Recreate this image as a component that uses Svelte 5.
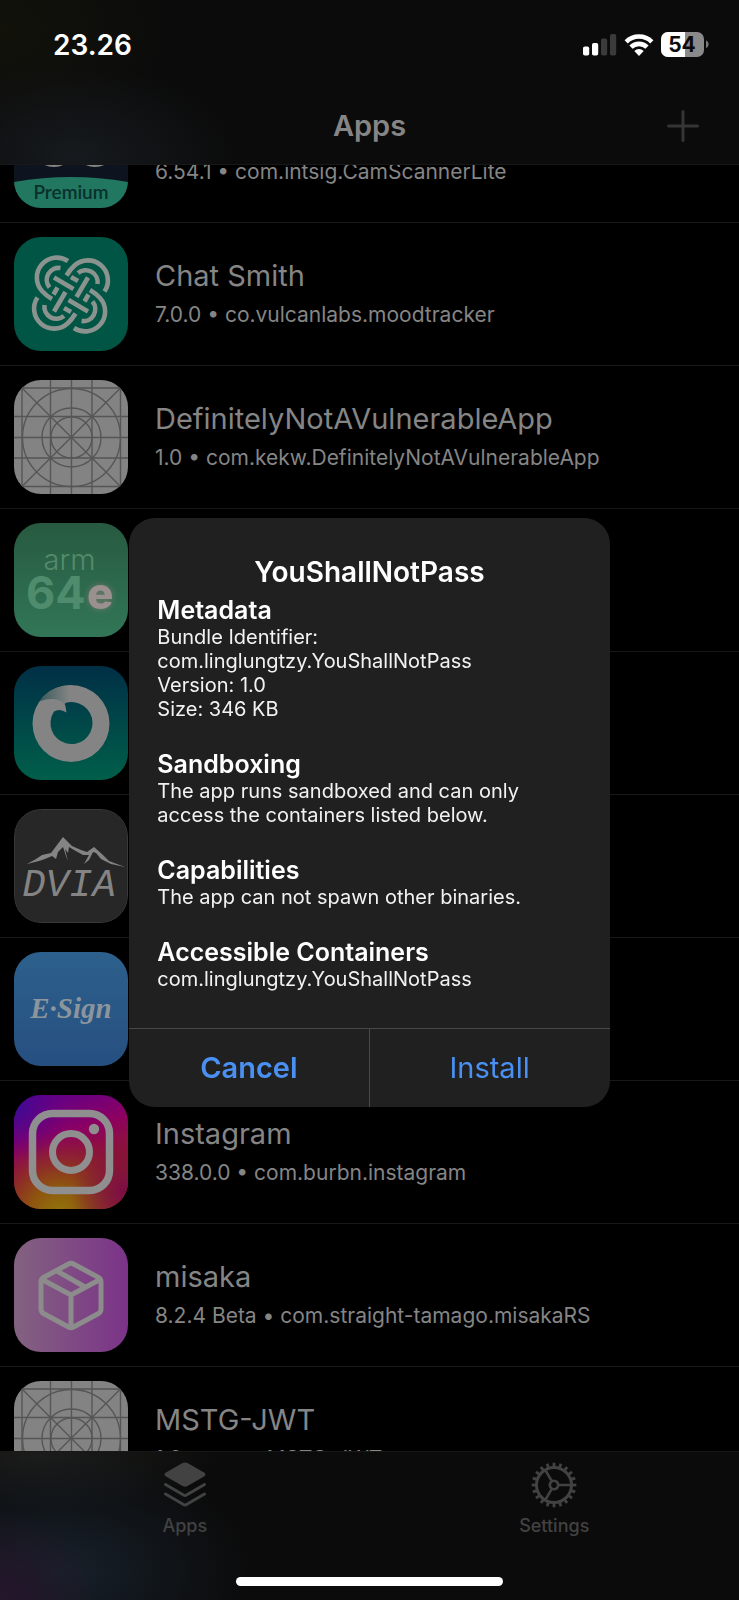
<script>
  const apps = [
    { icon: 'scanner', detail: '6.54.1 • com.intsig.CamScannerLite' },
    { icon: 'knot', name: 'Chat Smith', detail: '7.0.0 • co.vulcanlabs.moodtracker' },
    { icon: 'grid', name: 'DefinitelyNotAVulnerableApp', detail: '1.0 • com.kekw.DefinitelyNotAVulnerableApp' },
    { icon: 'arm' },
    { icon: 'ring' },
    { icon: 'dvia' },
    { icon: 'esign' },
    { icon: 'instagram', name: 'Instagram', detail: '338.0.0 • com.burbn.instagram' },
    { icon: 'box', name: 'misaka', detail: '8.2.4 Beta • com.straight-tamago.misakaRS' },
    { icon: 'grid', name: 'MSTG-JWT', detail: '1.0 • acme.MSTG-JWT' }
  ];

  const sections = [
    { title: 'Metadata', lines: ['Bundle Identifier:', 'com.linglungtzy.YouShallNotPass', 'Version: 1.0', 'Size: 346 KB'] },
    { title: 'Sandboxing', lines: ['The app runs sandboxed and can only access the containers listed below.'] },
    { title: 'Capabilities', lines: ['The app can not spawn other binaries.'] },
    { title: 'Accessible Containers', lines: ['com.linglungtzy.YouShallNotPass'] }
  ];

  const quarters = [0, 90, 180, 270];
  const gridLines = [8, 36.5, 57.5, 78, 106.5];
  const teeth = Array.from({ length: 20 }, (_, i) => i * 18);
</script>

<div class="screen">
  <header>
    <div class="status">
      <span class="time">23.26</span>
      <span class="indicators">
        <svg width="34" height="22" viewBox="0 0 34 22" aria-hidden="true">
          <rect x="0" y="12.500" width="6.200" height="9" rx="1.800" fill="#fff" />
          <rect x="9" y="9" width="6.200" height="12.500" rx="1.800" fill="#fff" />
          <rect x="18" y="4.500" width="6.200" height="17" rx="1.800" fill="#3b3b3b" />
          <rect x="27" y="0" width="6.200" height="21.500" rx="1.800" fill="#3b3b3b" />
        </svg>
        <svg width="30" height="22" viewBox="0 0 30 22" aria-hidden="true">
          <g fill="none" stroke="#fff" stroke-width="4.600">
            <path d="M2.200 7.800A18.200 18.200 0 0 1 27.800 7.800" />
            <path d="M7 13.200A11.400 11.400 0 0 1 23 13.200" />
          </g>
          <path d="M10.300 17A6.700 6.700 0 0 1 19.700 17L15 22Z" fill="#fff" />
        </svg>
        <svg width="48" height="25" viewBox="0 0 48 25" aria-hidden="true">
          <defs>
            <clipPath id="battery"><rect width="43" height="25" rx="7" /></clipPath>
          </defs>
          <g clip-path="url(#battery)">
            <rect width="43" height="25" fill="#8a8a8a" />
            <rect width="24" height="25" fill="#fff" />
          </g>
          <path d="M45 8.500C48.500 9.500 48.500 15 45 16Z" fill="#777" />
          <text x="21" y="20" text-anchor="middle" class="charge">54</text>
        </svg>
      </span>
    </div>
    <div class="nav">
      <h1>Apps</h1>
      <button class="add" aria-label="Add">
        <svg width="32" height="32" viewBox="0 0 32 32" aria-hidden="true">
          <path d="M16 1.500V30.500M1.500 16H30.500" stroke="#353535" stroke-width="3" stroke-linecap="round" />
        </svg>
      </button>
    </div>
  </header>

  <main>
    <ul>
      {#each apps as app}
        <li>
          <svg class="icon {app.icon}" viewBox="0 0 114 114" aria-hidden="true">
            {#if app.icon === 'scanner'}
              <rect width="114" height="114" fill="#0d131f" />
              <g fill="none" stroke="#858585" stroke-width="6">
                <circle cx="40" cy="51" r="19" />
                <circle cx="81" cy="51" r="19" />
              </g>
              <path d="M0 88Q57 78 114 88V114H0Z" fill="#217760" />
              <text x="57" y="105" text-anchor="middle" class="premium">Premium</text>
            {:else if app.icon === 'knot'}
              <rect width="114" height="114" fill="#005544" />
              <g fill="none" stroke="#8b938f" stroke-width="4.600">
                {#each quarters as turn}
                  <g transform="translate(57 57.500) rotate({turn})">
                    <path d="M-3-33.500A20 20 0 0 0-29-3.500Q-25 1-19 4.500" />
                    <path d="M-10.500-26.500A12 12 0 0 0-21.500-7" />
                    <path d="M-17-17L2.500-5.500M0-17.500L7-13.500" />
                  </g>
                {/each}
              </g>
            {:else if app.icon === 'grid'}
              <rect width="114" height="114" fill="#838383" />
              <g fill="none" stroke="#565656" stroke-width="1.400">
                {#each gridLines as at}
                  <path d="M{at} 0V114M0 {at}H114" />
                {/each}
                <circle cx="57.500" cy="57.500" r="49" />
                <circle cx="57.500" cy="57.500" r="29.500" />
                <circle cx="57.500" cy="57.500" r="20.500" />
                <path d="M8 8L106.500 106.500M106.500 8L8 106.500" />
              </g>
            {:else if app.icon === 'arm'}
              <defs>
                <linearGradient id="leaf" x2="0" y2="1">
                  <stop stop-color="#275a40" />
                  <stop offset="1" stop-color="#327657" />
                </linearGradient>
              </defs>
              <rect width="114" height="114" fill="url(#leaf)" />
              <text x="55.500" y="47" text-anchor="middle" class="thin">arm</text>
              <text x="12" y="86" class="digits">64</text>
              <text x="73" y="86" class="glow">e</text>
            {:else if app.icon === 'ring'}
              <defs>
                <linearGradient id="sea" x2="0" y2="1">
                  <stop stop-color="#002f46" />
                  <stop offset="1" stop-color="#005f4a" />
                </linearGradient>
                <linearGradient id="fold" x1="0" x2="1">
                  <stop stop-color="#3c5a5c" />
                  <stop offset="0.900" stop-color="#848484" />
                </linearGradient>
              </defs>
              <rect width="114" height="114" fill="url(#sea)" />
              <path fill-rule="evenodd" fill="#848484" d="M57 19A38.500 38.500 0 1 1 57 96A38.500 38.500 0 0 1 57 19ZM50.500 37.300A21 21 0 1 1 40 45.500Q46 42 52.500 46.500Q52 41 50.500 37.300Z" />
              <path d="M25.500 35.500C33 24 44 19 58 19.500Q62 28 50.500 38C46 33 37 31 25.500 35.500Z" fill="url(#fold)" />
            {:else if app.icon === 'dvia'}
              <rect x="0.500" y="0.500" width="113" height="113" rx="26" fill="#272727" stroke="#393939" />
              <path fill="#848484" d="M13 55L22 50L28 46L37 44L49 28L58 37L67 41L73 43L80 38L89 46L95 52L111 58L97 55L87 50L82 44L79 43L75 51L70 55L75 46L69 46L60 41L55 38L54 44L51 40L54 52L52 47L49 38L44 43L42 50L38 47L31 50L25 52Z" />
              <text x="55" y="87" text-anchor="middle" class="brush">DVIA</text>
            {:else if app.icon === 'esign'}
              <defs>
                <linearGradient id="sky" x2="0" y2="1">
                  <stop stop-color="#2d608c" />
                  <stop offset="1" stop-color="#264f80" />
                </linearGradient>
              </defs>
              <rect width="114" height="114" fill="url(#sky)" />
              <text x="57" y="66" text-anchor="middle" class="script">E·Sign</text>
            {:else if app.icon === 'instagram'}
              <defs>
                <linearGradient id="dusk" x1="0.150" y1="0" x2="0.500" y2="1">
                  <stop stop-color="#5a0090" />
                  <stop offset="0.400" stop-color="#8c0062" />
                  <stop offset="0.750" stop-color="#8e1a2c" />
                  <stop offset="1" stop-color="#8d3a14" />
                </linearGradient>
                <radialGradient id="ember" cx="0.400" cy="1.050" r="0.750">
                  <stop stop-color="#92780a" />
                  <stop offset="0.350" stop-color="#8e5410" />
                  <stop offset="1" stop-color="#8e1a2c" stop-opacity="0" />
                </radialGradient>
                <radialGradient id="rose" cx="1" cy="0.850" r="0.500">
                  <stop stop-color="#7c0a48" />
                  <stop offset="1" stop-color="#7c0a48" stop-opacity="0" />
                </radialGradient>
                <radialGradient id="violet" cx="0" cy="0.100" r="0.500">
                  <stop stop-color="#3a0b96" />
                  <stop offset="1" stop-color="#6b0080" stop-opacity="0" />
                </radialGradient>
              </defs>
              <rect width="114" height="114" fill="url(#dusk)" />
              <rect width="114" height="114" fill="url(#ember)" />
              <rect width="114" height="114" fill="url(#rose)" />
              <rect width="114" height="114" fill="url(#violet)" />
              <rect x="18.500" y="18.500" width="77" height="77" rx="20" fill="none" stroke="#8f8f8f" stroke-width="7.500" />
              <circle cx="57" cy="57" r="18.500" fill="none" stroke="#8f8f8f" stroke-width="7" />
              <circle cx="80" cy="34" r="5.200" fill="#8f8f8f" />
            {:else}
              <defs>
                <linearGradient id="orchid">
                  <stop stop-color="#836280" />
                  <stop offset="1" stop-color="#7b3388" />
                </linearGradient>
              </defs>
              <rect width="114" height="114" fill="url(#orchid)" />
              <g fill="none" stroke="#8c8c8c" stroke-width="5" stroke-linejoin="round" stroke-linecap="round">
                <path d="M54.500 26Q57 24.500 59.500 26L84.500 39.500Q87 41 87 44V71Q87 74 84.500 75.500L59.500 89Q57 90.500 54.500 89L29.500 75.500Q27 74 27 71V44Q27 41 29.500 39.500Z" />
                <path d="M28 41.500L57 57L86 41.500M57 57V89M43 33L71 49" />
              </g>
            {/if}
          </svg>
          {#if app.detail}
            <div class="label">
              <h2>{app.name}</h2>
              <p>{app.detail}</p>
            </div>
          {/if}
        </li>
      {/each}
    </ul>
  </main>

  <footer>
    <nav class="tabs">
      <button>
        <svg width="46" height="48" viewBox="0 0 46 48" aria-hidden="true">
          <path d="M20.500 2Q23 0.800 25.500 2L42 11.500Q45 13.500 42 15.500L25.500 25Q23 26.300 20.500 25L4 15.500Q1 13.500 4 11.500Z" fill="#424242" />
          <g fill="none" stroke="#424242" stroke-width="3" stroke-linecap="round" stroke-linejoin="round">
            <path d="M3.500 23.500L21.500 34Q23 34.800 24.500 34L42.500 23.500" />
            <path d="M3.500 33L21.500 43.500Q23 44.500 24.500 43.500L42.500 33" />
          </g>
        </svg>
        <span>Apps</span>
      </button>
      <button>
        <svg width="46" height="48" viewBox="-23 -24 46 48" aria-hidden="true">
          <g fill="none" stroke="#424242" stroke-width="3">
            <circle r="17.500" />
            <circle r="4.200" stroke-width="2.600" />
            <path d="M5 0H17M-2.500-4.300L-8.500-14.700M-2.500 4.300L-8.500 14.700" stroke-width="2.600" />
            {#each teeth as angle}
              <path d="M18 0H22.300" stroke-width="2.800" transform="rotate({angle})" />
            {/each}
          </g>
        </svg>
        <span>Settings</span>
      </button>
    </nav>
    <div class="home"></div>
  </footer>

  <div class="overlay">
    <div class="dialog" role="dialog" aria-modal="true" aria-labelledby="dialog-title">
      <div class="content">
        <h2 id="dialog-title">YouShallNotPass</h2>
        <div class="sections">
          {#each sections as section}
            <section>
              <h3>{section.title}</h3>
              {#each section.lines as line}
                <p>{line}</p>
              {/each}
            </section>
          {/each}
        </div>
      </div>
      <div class="actions">
        <button class="cancel">Cancel</button>
        <button>Install</button>
      </div>
    </div>
  </div>
</div>

<style>
  :global(body) {
    margin: 0;
    background: #000;
  }

  .screen {
    display: flex;
    flex-direction: column;
    height: 100vh;
    overflow: hidden;
    background: #000;
    color: #858585;
    font-family: Inter, "Liberation Sans", sans-serif;
  }

  h1, h2, h3, p, ul {
    margin: 0;
    padding: 0;
    font-weight: 400;
  }

  button {
    padding: 0;
    border: 0;
    background: none;
    color: inherit;
    font: inherit;
  }

  svg {
    display: block;
  }

  header {
    flex: none;
    border-bottom: 1px solid #181818;
    background:
      radial-gradient(ellipse 160px 90px at 75px 155px, #161a1e, #161a1e00),
      radial-gradient(ellipse 170px 120px at 0 30px, #12120b, #12120b00),
      #0b0b0b;
  }

  .status {
    display: flex;
    align-items: center;
    justify-content: space-between;
    height: 89px;
    padding: 0 30px 0 53px;
  }

  .time {
    color: #fff;
    font-size: 28px;
    font-weight: 600;
    line-height: 36px;
  }

  .indicators {
    display: flex;
    align-items: center;
    gap: 7px;
  }

  .charge {
    fill: #0b0b0b;
    font-size: 21px;
    font-weight: 700;
  }

  .nav {
    display: grid;
    grid-template-columns: 1fr auto 1fr;
    align-items: center;
    height: 75px;
    padding: 0 40px 2px;
    box-sizing: border-box;
  }

  h1 {
    grid-column: 2;
    font-size: 29px;
    font-weight: 600;
    line-height: 36px;
  }

  .add {
    justify-self: end;
  }

  main {
    flex: 1;
    min-height: 0;
    overflow: hidden;
  }

  ul {
    margin-top: -85px;
    list-style: none;
  }

  li {
    display: flex;
    align-items: center;
    gap: 27px;
    padding: 14px;
    border-bottom: 1px solid #181818;
  }

  .icon {
    flex: none;
    width: 114px;
    height: 114px;
    border-radius: 27px;
  }

  .premium {
    fill: #08302c;
    font: 600 19px Lato, sans-serif;
  }

  .thin {
    fill: #558a6c;
    font-size: 29px;
    font-weight: 300;
  }

  .digits {
    fill: #4f8c6d;
    font-size: 45px;
    font-weight: 700;
  }

  .glow {
    fill: #9a9090;
    font-size: 44px;
    font-weight: 800;
    filter: drop-shadow(0 0 3px #a08080a0);
  }

  .brush {
    fill: #848484;
    font: italic 400 39px "Liberation Mono", monospace;
  }

  .script {
    fill: #8c959c;
    font: italic 700 29px "Liberation Serif", serif;
  }

  .label {
    display: grid;
    gap: 6px;
    white-space: nowrap;
  }

  .label h2 {
    min-height: 36px;
    font-size: 29px;
    line-height: 34px;
  }

  .label p {
    font-size: 21px;
    line-height: 28px;
  }

  footer {
    display: flex;
    flex: none;
    flex-direction: column;
    justify-content: space-between;
    height: 134px;
    padding-bottom: 14px;
    border-top: 1px solid #181818;
    background:
      radial-gradient(ellipse 100px 90px at 0 100%, #26162c, #26162c00),
      radial-gradient(ellipse 190px 120px at 60px 80%, #17202a, #17202a00),
      radial-gradient(ellipse 180px 60px at 40px 0, #1c1d1b, #1c1d1b00),
      #0b0b0b;
  }

  .tabs {
    display: grid;
    grid-template-columns: 1fr 1fr;
    padding-top: 9px;
  }

  .tabs button {
    display: grid;
    justify-items: center;
    gap: 6px;
    color: #424242;
    font-size: 18px;
    font-weight: 500;
    line-height: 22px;
  }

  .home {
    align-self: center;
    width: 36%;
    height: 9px;
    border-radius: 5px;
    background: #fff;
  }

  .overlay {
    position: fixed;
    inset: 0;
    display: grid;
    place-items: center;
    padding-top: 25px;
  }

  .dialog {
    width: 65%;
    overflow: hidden;
    border-radius: 26px;
    background: #202020;
    color: #fff;
  }

  .content {
    padding: 36px 28px 37px;
  }

  .content h2 {
    margin-bottom: 5px;
    font-size: 28px;
    font-weight: 600;
    line-height: 36px;
    text-align: center;
  }

  .sections {
    display: grid;
    gap: 28px;
  }

  .sections h3 {
    font-size: 25px;
    font-weight: 600;
    line-height: 30px;
  }

  .sections p {
    color: #f2f2f2;
    font-size: 20px;
    line-height: 24px;
  }

  .actions {
    display: grid;
    grid-template-columns: 1fr 1fr;
    border-top: 1px solid #484848;
    color: #4a90f2;
    font-size: 29px;
    line-height: 36px;
  }

  .actions button {
    height: 78px;
  }

  .actions .cancel {
    border-right: 1px solid #484848;
    font-weight: 600;
  }
</style>
